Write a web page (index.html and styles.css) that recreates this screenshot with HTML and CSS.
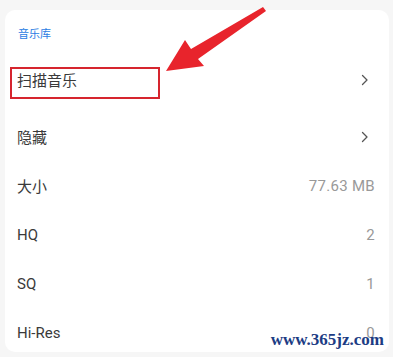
FILE: index.html
```html
<!DOCTYPE html>
<html lang="zh-CN">
<head>
  <meta charset="UTF-8" />
  <meta name="viewport" content="width=device-width, initial-scale=1.0"/>
  <title>音乐库</title>
  <link rel="stylesheet" href="styles.css">
</head>
<body>

<div class="card">
  <div class="section-title">音乐库</div>

  <div class="row row-first">
    <span class="label">扫描音乐</span>
    <svg class="chevron" width="8" height="12" viewBox="0 0 8 12"><path d="M1.5 1.5 L6 6 L1.5 10.5" fill="none" stroke="#555" stroke-width="1.3" stroke-linecap="round" stroke-linejoin="round"/></svg>
    <div class="highlight"></div>
  </div>

  <div class="row">
    <span class="label">隐藏</span>
    <svg class="chevron" width="8" height="12" viewBox="0 0 8 12"><path d="M1.5 1.5 L6 6 L1.5 10.5" fill="none" stroke="#555" stroke-width="1.3" stroke-linecap="round" stroke-linejoin="round"/></svg>
  </div>

  <div class="row">
    <span class="label">大小</span>
    <span class="value">77.63 MB</span>
  </div>

  <div class="row">
    <span class="label">HQ</span>
    <span class="value">2</span>
  </div>

  <div class="row">
    <span class="label">SQ</span>
    <span class="value">1</span>
  </div>

  <div class="row">
    <span class="label">Hi-Res</span>
    <span class="value">0</span>
  </div>
</div>

<svg class="arrow" width="393" height="100" viewBox="0 0 393 100">
  <polygon points="166,71 185,40 191,49 263,7 266,11 198,59 204,66" fill="#e8242c"/>
</svg>

<div class="watermark">www.365jz.com</div>

</body>
</html>
```

FILE: styles.css
```css
body {
  margin: 0;
  background-color: #f6f6f6;
  font-family: "Noto Sans CJK SC", Roboto, sans-serif;
  height: 357px;
  overflow: hidden;
  position: relative;
}

.card {
  background-color: white;
  margin: 10px 4px 0 5px;
  height: 342px;
  border-radius: 10px;
  overflow: hidden;
}

.section-title {
  height: 45px;
  box-sizing: border-box;
  padding: 17px 0 0 13px;
  font-size: 11px;
  line-height: 13px;
  color: #2b7de3;
}

.row {
  position: relative;
  display: flex;
  justify-content: space-between;
  align-items: center;
  height: 49px;
  padding: 0 14px 0 12px;
}

.row-first {
  margin-bottom: 8px;
}

.label {
  font-family: Roboto, "Noto Sans CJK SC", sans-serif;
  font-size: 15px;
  color: #3a3a3a;
}

.value {
  font-family: Roboto, "Noto Sans CJK SC", sans-serif;
  font-size: 15px;
  color: #999;
  letter-spacing: 0.3px;
}

.chevron {
  margin-right: 6px;
}

.highlight {
  position: absolute;
  left: 5px;
  top: 12px;
  width: 146px;
  height: 28px;
  border: 2px solid #d6252e;
}

.arrow {
  position: absolute;
  left: 0;
  top: 0;
}

.watermark {
  position: absolute;
  right: 9px;
  bottom: 7px;
  font-family: "Liberation Serif", serif;
  font-weight: bold;
  font-size: 17px;
  color: #1c3c84;
}
```
